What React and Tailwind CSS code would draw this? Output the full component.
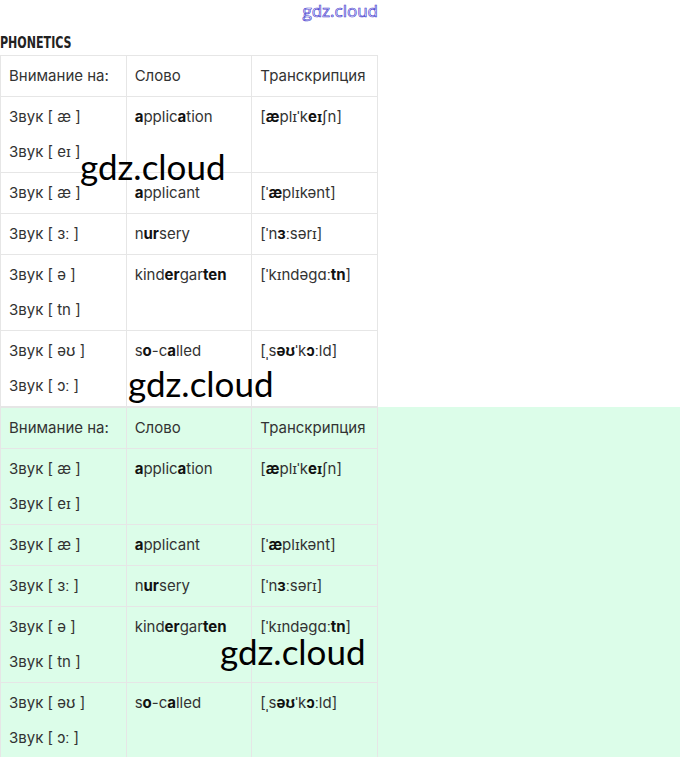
import React from 'react';

const rows = [
  {
    sounds: ['Звук [ æ ]', 'Звук [ eɪ ]'],
    word: [['a', 1], ['pplic', 0], ['a', 1], ['tion', 0]],
    tr: [['[', 0], ['æ', 1], ['plɪˈk', 0], ['eɪ', 1], ['ʃn]', 0]],
  },
  {
    sounds: ['Звук [ æ ]'],
    word: [['a', 1], ['pplicant', 0]],
    tr: [['[ˈ', 0], ['æ', 1], ['plɪkənt]', 0]],
  },
  {
    sounds: ['Звук [ ɜː ]'],
    word: [['n', 0], ['ur', 1], ['sery', 0]],
    tr: [['[ˈn', 0], ['ɜ', 1], ['ːsərɪ]', 0]],
  },
  {
    sounds: ['Звук [ ə ]', 'Звук [ tn ]'],
    word: [['kind', 0], ['er', 1], ['gar', 0], ['ten', 1]],
    tr: [['[ˈkɪndəgɑː', 0], ['tn', 1], [']', 0]],
  },
  {
    sounds: ['Звук [ əʊ ]', 'Звук [ ɔː ]'],
    word: [['s', 0], ['o', 1], ['-c', 0], ['a', 1], ['lled', 0]],
    tr: [['[ˌs', 0], ['əʊ', 1], ['ˈk', 0], ['ɔ', 1], ['ːld]', 0]],
  },
];

function Parts({ parts }) {
  return parts.map(([t, b], i) => (
    <span key={i} className={b ? 'font-bold text-[#111]' : ''}>{t}</span>
  ));
}

function PhoneticsTable() {
  const cell = 'border border-[#e6e6e6] px-2 pt-2 pb-2 align-top';
  return (
    <table className="w-[378px] border-collapse table-fixed text-[15px] leading-6 text-[#333]">
      <tbody>
        <tr>
          <td className={cell}>Внимание на:</td>
          <td className={cell}>Слово</td>
          <td className={cell}>Транскрипция</td>
        </tr>
        {rows.map((r, i) => (
          <tr key={i}>
            <td className={cell}>
              <div className="flex flex-col gap-[11px]">
                {r.sounds.map((s) => <p key={s}>{s}</p>)}
              </div>
            </td>
            <td className={cell}><Parts parts={r.word} /></td>
            <td className={cell}><Parts parts={r.tr} /></td>
          </tr>
        ))}
      </tbody>
    </table>
  );
}

function Mark({ className }) {
  return (
    <span className={`absolute text-[35px] leading-none text-black font-['Lato','Open_Sans',sans-serif] ${className}`}>
      gdz.cloud
    </span>
  );
}

export default function App() {
  return (
    <div className="relative w-[680px] h-[757px] overflow-hidden bg-white font-['Inter','Noto_Sans',sans-serif]">
      <div className="flex justify-end w-[378px] h-[28px] pt-[1px]">
        <span className="text-[17px] leading-5 text-transparent font-['Open_Sans',sans-serif] [-webkit-text-stroke:0.7px_#4a3fd0]">gdz.cloud</span>
      </div>
      <h2 className="h-[27px] pt-[5px] text-[15px] leading-5 font-bold text-[#222] font-['DejaVu_Sans_Condensed','Liberation_Sans',sans-serif]">
        <span className="inline-block origin-left scale-x-[0.82]">PHONETICS</span>
      </h2>
      <PhoneticsTable />
      <div className="bg-[#dcfde9]">
        <PhoneticsTable />
      </div>
      <Mark className="left-[80px] top-[149px]" />
      <Mark className="left-[128px] top-[366px]" />
      <Mark className="left-[220px] top-[634px]" />
    </div>
  );
}
